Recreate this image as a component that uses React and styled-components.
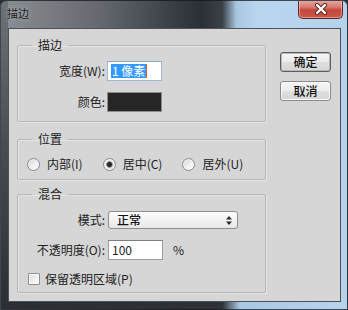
import React from "react";
import styled, { createGlobalStyle } from "styled-components";

const Global = createGlobalStyle`
  html, body { margin: 0; padding: 0; background: #2b2e33; }
  * { box-sizing: border-box; }
  body { font-family: "Noto Sans CJK SC", "Liberation Sans", sans-serif; }
`;

const Window = styled.div`
  width: 348px;
  height: 310px;
  display: flex;
  flex-direction: column;
  border: 1px solid rgba(20, 24, 30, 0.75);
  border-radius: 6px 6px 0 0;
  overflow: hidden;
  background:
    linear-gradient(180deg, #6f7378 0%, #4a4e54 45%, #2a2d31 100%) left / 7px 100% no-repeat,
    linear-gradient(90deg, #2a2d31 0%, #2e3237 64%, #a9c8e3 69%, #b7d4ee 100%) bottom / 100% 7px no-repeat,
    linear-gradient(90deg, #8b8f94 0%, #666a70 28%, #353940 52%, #2c3036 58%, #3b4148 64%, #a8c6e0 68%, #b9d6ef 74%, #b4d2ec 100%);
`;

const TitleBar = styled.div`
  height: 27px;
  flex: none;
  display: flex;
  align-items: flex-start;
  justify-content: space-between;
  padding: 0 4px 0 6px;
`;

const Title = styled.div`
  margin-top: 5px;
  font-size: 11px;
  line-height: 14px;
  color: #1b1d20;
  text-shadow: 0 0 4px rgba(230, 235, 240, 0.55);
`;

const CloseButton = styled.div`
  width: 45px;
  height: 19px;
  margin-top: -1px;
  display: flex;
  align-items: center;
  justify-content: center;
  border: 1px solid #5e2a26;
  border-top: none;
  border-radius: 0 0 5px 5px;
  background: linear-gradient(180deg, #e9aaa2 0%, #d97a70 40%, #c6473b 55%, #c9584c 100%);
  box-shadow: inset 0 0 0 1px rgba(255, 220, 215, 0.45);
`;

const Frame = styled.div`
  flex: 1;
  display: flex;
  padding: 0 6px 7px 7px;
`;

const Client = styled.div`
  flex: 1;
  display: flex;
  align-items: flex-start;
  padding: 9px 0 0 8px;
  background: #d6d6d6;
  border: 1px solid #4c5157;
  color: #222;
  font-size: 12px;
  line-height: 14px;
`;

const Main = styled.div`
  width: 249px;
  display: flex;
  flex-direction: column;
`;

const Group = styled.fieldset`
  margin: ${(p) => p.$mt || 0}px 0 0 0;
  padding: ${(p) => p.$pt}px 0 ${(p) => p.$pb}px 0;
  border: 1px solid #b7b7b7;
  border-radius: 2px;
  box-shadow: 1px 1px 0 #e4e4e4, inset 1px 1px 0 #e4e4e4;
  min-width: 0;
  display: flex;
  flex-direction: column;
  gap: ${(p) => p.$gap || 0}px;
`;

const Legend = styled.legend`
  margin-left: 14px;
  padding: 0 6px;
  font-size: 12px;
  line-height: 14px;
  color: #1c1c1c;
`;

const Row = styled.div`
  display: flex;
  align-items: center;
  height: ${(p) => p.$h}px;
  padding-left: ${(p) => p.$pl || 0}px;
  gap: ${(p) => p.$gap || 0}px;
`;

const Label = styled.span`
  width: 87px;
  text-align: right;
  white-space: nowrap;
  margin-right: ${(p) => p.$mr}px;
`;

const TextBox = styled.div`
  width: 55px;
  height: ${(p) => p.$h || 20}px;
  display: flex;
  align-items: center;
  padding-left: ${(p) => p.$pl || 3}px;
  background: #fff;
  border: 1px solid ${(p) => (p.$focus ? "#9fb8d4" : "#9c9c9c")};
  border-top-color: ${(p) => (p.$focus ? "#8aa6c6" : "#7e7e7e")};
  font-size: 12px;
`;

const Selection = styled.span`
  background: #3399ff;
  color: #fff;
  line-height: 14px;
  padding: 0 1px 0 1px;
`;

const Caret = styled.span`
  width: 1px;
  height: 14px;
  background: #d0652e;
`;

const Swatch = styled.div`
  width: 55px;
  height: 20px;
  background: #262626;
  border: 1px solid #8c8c8c;
`;

const Select = styled.div`
  width: 130px;
  height: 18px;
  display: flex;
  align-items: center;
  justify-content: space-between;
  padding: 0 5px 0 8px;
  border: 1px solid #8d8d8d;
  border-radius: 3px;
  background: linear-gradient(180deg, #fdfdfd 0%, #f1f1f1 55%, #e6e6e6 100%);
  font-weight: 500;
  color: #151515;
`;

const Unit = styled.span`
  margin-left: 10px;
`;

const RadioItem = styled.label`
  display: flex;
  align-items: center;
  gap: 7px;
  white-space: nowrap;
`;

const RadioCircle = styled.span`
  width: 13px;
  height: 13px;
  border-radius: 50%;
  border: 1px solid #8a8a8a;
  background: ${(p) =>
    p.$on
      ? "radial-gradient(circle, #2a2a2a 0 2px, #7a7a7a 2.8px, #e4e4e4 3.6px, #f6f6f6 100%)"
      : "linear-gradient(135deg, #d2d2d2 0%, #f3f3f3 60%, #ffffff 100%)"};
  box-shadow: inset 0 0 0 1px #f4f4f4;
`;

const CheckBox = styled.span`
  width: 12px;
  height: 12px;
  border: 1px solid #8e8e8e;
  border-radius: 1px;
  background: linear-gradient(135deg, #d9d9d9 0%, #f0f0f0 55%, #fdfdfd 100%);
  box-shadow: inset 0 0 0 1px #f7f7f7;
`;

const Buttons = styled.div`
  margin: 14px 0 0 14px;
  display: flex;
  flex-direction: column;
  gap: 9px;
`;

const Button = styled.div`
  width: 51px;
  height: 20px;
  display: flex;
  align-items: center;
  justify-content: center;
  border: 1px solid ${(p) => (p.$default ? "#5c5c5c" : "#8a8a8a")};
  border-radius: 3px;
  background: linear-gradient(180deg, #f6f6f6 0%, #ececec 48%, #dedede 52%, #d6d6d6 100%);
  box-shadow: inset 0 0 0 1px ${(p) => (p.$default ? "#b8b8b8" : "#fafafa")};
  font-size: 12px;
  font-weight: 500;
  color: #111;
`;

const Arrows = () => (
  <svg width="6" height="9" viewBox="0 0 6 9">
    <path d="M3 0 L6 3.5 L0 3.5 Z M3 9 L6 5.5 L0 5.5 Z" fill="#2a2a2a" />
  </svg>
);

const CloseX = () => (
  <svg width="14" height="12" viewBox="0 0 14 12">
    <path d="M3 2 L11 10 M11 2 L3 10" stroke="#5a2520" strokeWidth="4.2" strokeLinecap="round" />
    <path d="M3 2 L11 10 M11 2 L3 10" stroke="#ffffff" strokeWidth="2.4" strokeLinecap="round" />
  </svg>
);

export default function App() {
  return (
    <>
      <Global />
      <Window>
        <TitleBar>
          <Title>描边</Title>
          <CloseButton>
            <CloseX />
          </CloseButton>
        </TitleBar>
        <Frame>
          <Client>
            <Main>
              <Group $pt={9} $pb={9} $gap={11}>
                <Legend>描边</Legend>
                <Row $h={20}>
                  <Label $mr={2}>宽度(W):</Label>
                  <TextBox $focus>
                    <Selection>1 像素</Selection>
                    <Caret />
                  </TextBox>
                </Row>
                <Row $h={20}>
                  <Label $mr={2}>颜色:</Label>
                  <Swatch />
                </Row>
              </Group>

              <Group $mt={10} $pt={10} $pb={7}>
                <Legend>位置</Legend>
                <Row $h={16} $pl={9} $gap={20}>
                  <RadioItem>
                    <RadioCircle />
                    内部(I)
                  </RadioItem>
                  <RadioItem>
                    <RadioCircle $on />
                    居中(C)
                  </RadioItem>
                  <RadioItem>
                    <RadioCircle />
                    居外(U)
                  </RadioItem>
                </Row>
              </Group>

              <Group $mt={7} $pt={10} $pb={5} $gap={11}>
                <Legend>混合</Legend>
                <Row $h={18}>
                  <Label $mr={3}>模式:</Label>
                  <Select>
                    <span>正常</span>
                    <Arrows />
                  </Select>
                </Row>
                <Row $h={20}>
                  <Label $mr={3}>不透明度(O):</Label>
                  <TextBox $pl={3}>100</TextBox>
                  <Unit>%</Unit>
                </Row>
                <Row $h={16} $pl={10} $gap={5}>
                  <CheckBox />
                  保留透明区域(P)
                </Row>
              </Group>
            </Main>
            <Buttons>
              <Button $default>确定</Button>
              <Button>取消</Button>
            </Buttons>
          </Client>
        </Frame>
      </Window>
    </>
  );
}
